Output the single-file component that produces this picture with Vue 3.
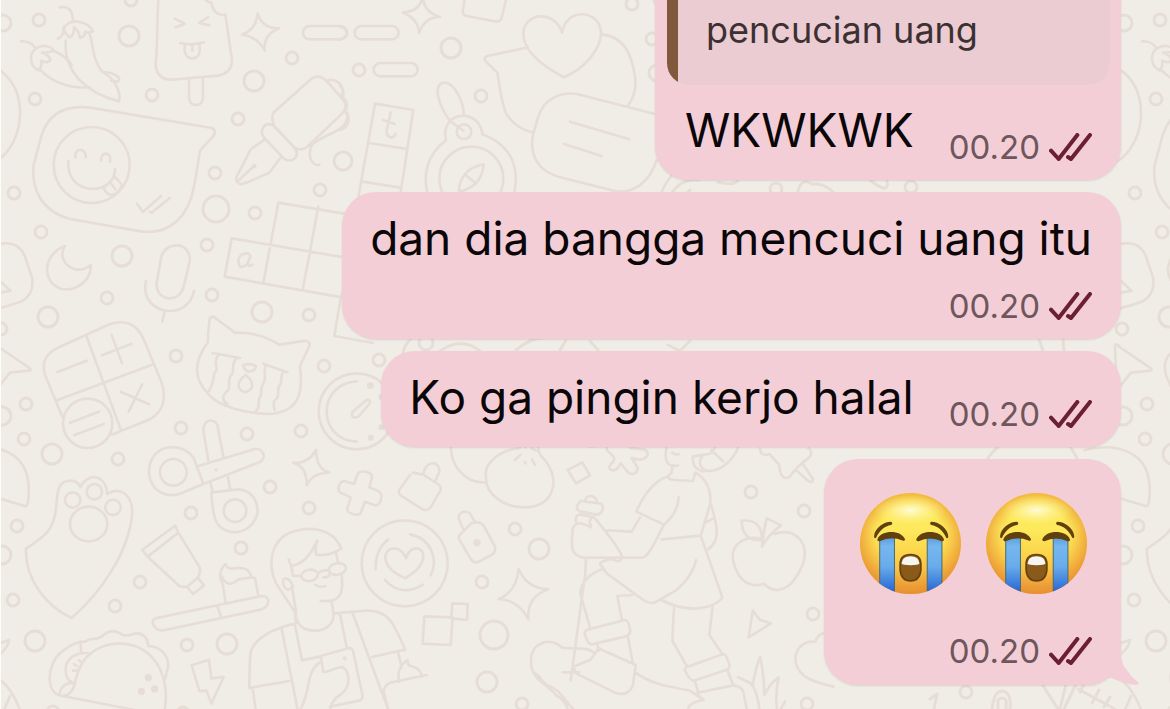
<script setup>
const time = '00.20'
const emojis = [0, 1]

// Small bubbles scattered through the wallpaper: [cx, cy, r]
const dots = [
  [3, 23, 8], [39, 20, 6], [129, 36, 10], [131, 0, 6], [35, 99, 6], [152, 95, 6], [14, 193, 6], [41, 232, 6],
  [238, 119, 6], [254, 81, 10], [292, 58, 6], [215, 173, 6], [216, 209, 13], [255, 213, 6], [320, 190, 6], [343, 161, 9],
  [122, 256, 10], [107, 298, 6], [48, 317, 10], [207, 245, 6], [212, 295, 6], [262, 312, 10], [309, 315, 6],
  [324, 366, 6], [379, 360, 6], [176, 356, 6], [1, 329, 6], [26, 404, 6], [2, 416, 9], [24, 439, 6], [52, 454, 10],
  [118, 459, 6], [181, 428, 6], [247, 434, 6], [301, 431, 6], [17, 526, 6], [2, 555, 9], [13, 600, 6], [35, 641, 10],
  [140, 582, 6], [115, 606, 6], [191, 513, 6], [241, 548, 6], [270, 487, 6], [309, 508, 6], [187, 645, 6], [227, 644, 10],
  [53, 712, 6], [183, 713, 6],
  [359, 70, 6], [451, 48, 10], [481, 96, 6], [632, 4, 6], [652, 39, 6], [657, 73, 8], [776, 189, 6], [911, 187, 6],
  [426, 343, 7], [515, 529, 6], [539, 549, 10], [482, 582, 6], [494, 635, 14], [487, 682, 10], [522, 704, 6],
  [751, 492, 6], [804, 511, 6], [813, 614, 6], [807, 704, 6], [966, 692, 6]
]
</script>

<template>
  <main class="chat">
    <svg class="wallpaper" aria-hidden="true">
      <defs>
        <g id="doodles">
          <circle v-for="(d, i) in dots.slice(0, 49)" :key="i" :cx="d[0]" :cy="d[1]" :r="d[2]" />

          <g class="zoomed" transform="scale(.333333)">
            <!-- chillies -->
            <path d="M180 22Q218 14 219 64M174 116Q192 106 190 88Q205 58 240 66Q268 72 279 94Q267 100 256 95Q254 112 240 114Q236 90 222 82Q222 110 208 112Q194 100 190 82M197 122C190 215 260 280 357 304C366 270 335 230 309 217C274 180 281 128 268 100M63 124Q90 122 104 142M116 211C90 200 85 165 106 146C130 130 155 140 162 153Q140 158 126 158Q150 166 151 181Q140 192 124 182Q126 202 116 211M162 153C190 165 205 180 216 195M122 211C160 250 215 266 270 262M309 217C340 214 370 236 352 245L334 242" />
            <!-- ice cream -->
            <path d="M475 0C470 90 474 120 467 195Q472 240 515 239L655 227Q696 218 696 180L676 44Q640 48 634 8Q618 6 610-8M567 237V295C571 322 605 322 609 295V232M524 56L554 71L527 82M624 52L597 69L628 76M541 129Q575 138 611 127M554 136V154C560 184 596 180 599 154V134M577 137V152" />
            <!-- sparkle and pills -->
            <path d="M773 40Q786 85 837 85Q790 104 794 151Q772 110 726 104Q768 90 773 40Z" />
            <rect x="909" y="78" width="132" height="40" rx="20" />
            <!-- speech bubble with face -->
            <path d="M125 405C145 345 190 313 270 323L636 384C650 392 645 401 638 410L600 452C590 510 585 555 574 592C548 670 490 708 410 692L210 657C125 635 92 565 101 495Z" />
            <circle cx="275" cy="495" r="114" />
            <path d="M226 472C222 442 258 442 257 472M303 482C302 452 337 454 330 486M205 484C197 590 345 590 345 507M345 530L311 564C323 592 351 594 366 555ZM330 546L346 568M411 611L429 636L483 588M449 635L455 638L509 594" />
            <!-- fountain pen -->
            <path d="M820 338L930 240C950 220 970 234 982 245L1030 300C1042 315 1035 332 1025 342L925 437C908 455 890 448 880 440L825 382Q812 360 820 338M985 240C1020 235 1035 270 1024 287M1042 340C1050 398 955 405 934 438C920 475 942 500 958 494M787 388C795 366 815 370 827 382L879 438C910 470 870 495 850 474L792 413Q782 400 787 388M792 420L752 448L710 530C705 550 718 556 735 550L808 518L841 474M714 543L763 497" />
            <circle class="fill" cx="763" cy="498" r="7" />
            <!-- big ball on the edge -->
            <path d="M-60 190C110 210 90 480-60 502" />
          </g>

          <g class="zoomed" transform="translate(0 230) scale(.333333)">
            <!-- speech bubble edge, moon -->
            <path d="M-60 46L15 40C45 38 65 55 75 80L96 142C102 178 90 200 65 214Q30 228-60 250M-18 190L32 183L-12 142M195 48C130 72 120 155 185 177C230 185 275 150 272 105C225 145 165 90 195 48Z" />
            <!-- microphone -->
            <path d="M484 80C498 30 575 35 569 95L551 170C538 222 466 214 470 160ZM438 153C425 210 467 240 505 243C545 245 575 220 582 182M494 245L487 275" />
            <!-- crossword -->
            <path d="M695 25L1050 85M674 140L1030 203M695 25L674 140M835-82L790 158M955-70L908 180M1070-60L1025 200M835-82L1050-46M1022 203L1003 318L1119 339M717 102C705 70 755 60 751 82L739 105Q718 118 717 102M751 80C740 105 743 112 757 104" />
            <!-- calculator -->
            <path d="M190 346L325 284C380 265 412 285 432 330L484 455C505 520 480 550 450 568L335 614M187 560L135 435C120 380 155 360 190 346M258 315L364 603M167 512L460 403M172 426L260 392M306 376L395 341M335 315L366 400M362 485L447 523M427 462L386 545M210 578L297 545M223 615L312 582" />
            <circle cx="263" cy="580" r="74" />
            <!-- weeping cat -->
            <path d="M623 338Q625 295 629 268C633 255 645 262 650 267L705 308Q775 305 838 344L918 332Q933 336 927 350L900 408C912 500 890 545 810 552C735 550 655 530 623 490C575 440 588 385 623 338M638 369L720 384M790 401L862 427M654 376C635 405 662 412 643 430C640 445 642 460 625 486M708 386C690 410 708 424 690 440C682 460 695 478 677 487C665 500 668 514 682 522M797 407C787 430 803 440 790 460C777 482 790 490 779 502C770 520 785 527 766 546M853 424C835 440 852 458 837 468C830 490 842 500 822 513Q820 528 824 540M730 405Q755 398 768 409C765 425 752 424 742 424Q730 416 730 405M737 435C708 455 710 480 735 487C765 480 762 454 737 435" />
            <!-- stopwatch -->
            <circle cx="1070" cy="544" r="114" />
            <path d="M1070 454C950 460 950 630 1070 635M1100 510Q1115 508 1108 522L1075 560C1058 568 1053 556 1057 546Z" />
            <g class="fill">
              <circle cx="1111" cy="467" r="10" /><circle cx="1144" cy="501" r="9" /><circle cx="1155" cy="546" r="9" /><circle cx="1144" cy="592" r="9" /><circle cx="1112" cy="623" r="9" />
            </g>
            <!-- paper plane -->
            <path d="M-18 346Q-14 338 0 354L90 415Q96 421 85 422L30 428L-10 478Q-18 400-18 346" />
          </g>

          <g class="zoomed" transform="translate(0 460) scale(.333333)">
            <!-- umbrella edge -->
            <path d="M-110-30C-30-50 95-40 86 105Q84 143 74 138L-20 110" />
            <!-- paw -->
            <path d="M78 266C140 225 155 210 165 165C175 115 162 60 215 62Q235 64 241 82C260 40 315 37 322 102C355 80 400 98 396 165C385 280 300 400 215 474C140 440 75 360 78 266Z" />
            <ellipse cx="266" cy="192" rx="56" ry="52" />
            <circle cx="218" cy="120" r="23" /><circle cx="283" cy="95" r="23" /><circle cx="339" cy="142" r="23" />
            <!-- scissors -->
            <path d="M582-4C545-60 445-50 447 40C453 95 500 115 540 101L610 72L582-4M610 72L780 6C805-8 785-44 755-30L595 18M625 2L610-90C610-128 655-128 655-90L671-6M631 66L638 97L715 88C760 90 775 130 772 160C755 230 665 235 645 175Q637 150 634 98M684 52L690 86" />
            <circle cx="520" cy="37" r="40" /><circle cx="705" cy="152" r="34" /><circle class="fill" cx="648" cy="30" r="5" />
            <!-- paint tube -->
            <path d="M426 270L526 197L535 218L443 290ZM535 218L599 322Q603 335 594 352L562 380Q550 382 538 378L443 290M594 354L612 376L579 402L560 380" />
            <!-- toothbrush -->
            <path d="M476 473L785 408C815 408 808 440 785 448L495 510C465 520 440 475 476 473M652 438L663 470M677 428L668 372C655 350 660 328 677 312Q678 325 695 326C735 318 750 330 755 352Q730 354 712 360Q700 374 684 370Q670 364 666 350M755 352L765 354L775 406" />
            <!-- taco -->
            <path d="M188 708C230 700 220 665 235 635C265 540 400 520 463 600C490 635 505 690 494 747M188 708Q300 730 405 750M188 708C130 700 145 610 180 580Q205 556 241 545L257 545C270 530 290 545 312 524C330 508 350 512 367 524C385 532 395 520 410 520C435 520 443 540 445 558C490 560 515 600 500 635L496 655M241 548L244 576M272 582C240 572 195 590 197 630Q198 660 215 666M180 700Q180 680 205 670L222 668M222 612L230 618M236 600L243 606M219 632H230" />
            <g class="fill"><circle cx="445" cy="653" r="11" /><circle cx="424" cy="694" r="11" /><circle cx="464" cy="687" r="11" /></g>
            <!-- bolt -->
            <path d="M575 616L627 599L634 655L671 651L634 731L620 692L598 693Z" />
            <!-- sparkle, plus -->
            <path d="M948-30Q950 30 988 37Q935 40 920 76Q922 20 880 8Q925 12 948-30Z" />
            <path d="M1073 42C1080 28 1117 36 1116 50L1108 82L1136 94C1152 102 1142 138 1125 136L1095 125L1082 158C1074 170 1040 160 1042 146L1052 112L1022 98C1008 90 1020 58 1036 64L1062 72Z" />
            <!-- student -->
            <path d="M888 490L884 455L828 370C800 310 815 240 870 218C930 195 1000 205 1024 266C995 284 970 288 948 284Q945 265 952 241C930 290 905 315 873 317L866 298M873 317L879 347L903 348M879 380C865 345 840 350 852 378Q862 398 876 382L888 455C885 490 905 512 945 512C980 512 1002 490 1001 460L994 422L962 423M994 422C1025 415 1030 390 1025 344M1008 278L1015 310M945 374Q955 384 976 378M970 352Q985 354 990 342" />
            <ellipse cx="929" cy="346" rx="25" ry="17" transform="rotate(-10 929 346)" />
            <ellipse cx="1012" cy="327" rx="26" ry="17" transform="rotate(-10 1012 327)" />
            <path d="M954 340Q970 326 987 332M888 490C800 510 760 545 751 580Q748 640 748 684L868 663M845 506L893 750M758 684L767 750M1001 460L1100 452C1170 450 1185 500 1215 569L1115 591M884 490L906 601L958 590M1020 462L1040 562M1058 460L1165 750M1195 580L1205 622M962 588L1045 565Q1055 562 1059 572L1088 708Q1088 718 1078 722L990 740M962 588L970 636C990 638 1010 618 1030 622C1050 640 1055 680 1020 705Q995 720 990 750M958 608C915 640 935 690 900 750M1198 665C1190 640 1200 615 1222 600Q1222 620 1240 620Q1265 630 1265 650M1152 690C1155 675 1165 668 1180 666L1280 645M1150 690L1165 750" />
            <circle class="fill" cx="1034" cy="595" r="6" />
            <!-- leaf and ball edge -->
            <path d="M-20 550Q5 550 27 540Q25 565-10 590M-40 650Q20 645 60 750M30 708L12 750" />
          </g>
        </g>
      </defs>

      <use href="#doodles" />
      <use href="#doodles" x="1121" />
      <circle v-for="(d, i) in dots.slice(49)" :key="i" :cx="d[0]" :cy="d[1]" :r="d[2]" />

      <g class="zoomed" transform="translate(340 0) scale(.333333)">
        <path d="M0 80C28 86 28 110 0 118M0 258Q15 270 8 290C25 305 22 325 15 336C35 350 25 385 0 390" />
        <rect x="44" y="78" width="132" height="40" rx="20" />
        <rect x="101" y="189" width="132" height="40" rx="20" />
        <path d="M248-10Q252 38 300 51Q255 50 237 99Q235 55 188 38Q240 35 248-10M375-10L368 35Q370 46 380 48L470 65Q483 64 486 50L500-10" />
        <!-- heart over chat bubbles -->
        <path d="M672 232C620 205 550 160 550 100C552 40 640 25 667 98C675 25 775 25 783 95C785 145 735 205 672 232M785 103C850 108 875 160 885 230Q892 280 863 318M560 143L442 168C430 172 434 182 440 187L472 218C480 265 482 300 498 340Q525 385 578 397M945 342L720 284C660 270 610 300 595 350L580 400C565 470 600 515 655 530L820 572C880 585 930 545 950 480M690 365L868 418M672 432L785 468M935-10Q955 30 970 45" />
        <!-- word tiles -->
        <path d="M105 311L220 330L180 590M105 311L50 620M87 429L195 446M67 545L180 563M152 338L140 390C138 415 160 418 167 402M129 360L164 372" />
        <!-- compass -->
        <path d="M370 392L330 363C295 315 278 255 310 248C345 245 372 310 371 346M318 421C308 380 330 348 371 347C410 350 425 380 427 403C485 425 525 465 527 530Q528 570 515 600M318 421C265 460 240 525 270 600M357 572C360 525 390 500 431 493C428 530 410 560 365 573ZM376 524L408 550" />
        <circle cx="372" cy="395" r="22" />
        <circle cx="394" cy="536" r="96" />
        <path d="M960 590Q970 555 1000 520" />
      </g>

      <g class="zoomed" transform="translate(410 440) scale(.333333)">
        <!-- candy and garlic -->
        <path d="M8 98L40 104L88 135Q95 144 90 154L60 205Q50 214 38 208L-28 166Q-38 158-30 146L0 105M40 102C45 60 90 60 88 95L75 125M126 0C110 70 165 130 225 127M228 110C220 75 265 30 330 24M385 22Q385 45 405 60C450 120 435 195 350 202C280 205 225 160 228 110M331 45L315 60M346 22L347 0M344 66L347 70M364 24L378 32M366 58L375 75" />
        <path d="M473 90L517 67L540 106L498 130ZM540 20L595 15C570 40 640 42 600 75C590 95 620 100 632 70L655 98C675 110 690 90 678 75L665 54C710 70 728 35 700 28L660 24" />
        <!-- lotion bottle -->
        <path d="M152 282L183 250Q210 242 222 258L255 320Q258 335 247 343L205 366Q192 370 183 358L148 298Q144 288 152 282M158 265L146 235C145 210 180 210 184 228L196 248" />
        <circle class="fill" cx="201" cy="308" r="11" />
        <!-- coffee cup -->
        <circle cx="-16" cy="370" r="129" />
        <path d="M0 283C65 295 85 360 62 406M-65 298Q-105 330-103 388M-75 420C-45 455 0 460 38 434M-12 355C0 310 50 320 38 360C30 390 5 400-14 415C-45 400-70 385-74 355C-75 315-25 315-12 355" />
        <!-- sparkle, squares -->
        <path d="M326 387Q350 445 415 448Q350 470 355 538Q325 480 266 477Q320 455 326 387M43 529L128 532L122 615L38 611ZM127 490L173 492L171 540L124 535Z" />
        <!-- hiker -->
        <path d="M770 20C760 65 775 75 787 78L785 98L772 110C735 120 700 165 679 215L762 254Q803 220 806 172M772 110Q780 120 795 120L849 123L856 98C895 120 905 160 900 195L872 287L755 298M787 38Q795 46 806 42M788 75Q798 80 804 76M849 50C845 85 875 100 890 92C860 80 870 55 876 50M915 20C910 50 885 40 849 50M890 92C930 98 970 60 985 22M904 30L940 65M902 190C920 250 935 300 895 328M882 250L910 235M690 233L665 275L593 271M762 254C735 305 715 353 695 353H520C470 345 490 295 488 265C500 240 525 252 543 262Q534 235 550 230C580 265 610 300 635 345Q637 365 620 363L604 358C590 358 570 366 570 372L590 400L700 480Q720 493 735 487L800 450Q850 405 858 360M872 287L937 472Q920 500 855 506Q800 505 755 480M498 245Q495 225 510 223L542 230M512 183L570 190Q582 195 577 212Q570 225 560 224L510 214Q498 210 502 195ZM525 183C530 160 558 165 562 188" />
        <path d="M528 357L526 398L482 722M576 388C540 400 508 430 512 465L540 562M667 465L622 468L636 540M535 568L645 540Q655 540 661 572Q660 585 648 589L545 613Q535 615 524 582Q524 570 535 568M565 625Q550 650 540 660L490 680L498 700L615 758C650 770 670 750 671 720L677 675L565 625M654 592L668 668M562 614L566 632M556 642C530 615 490 630 455 622C425 590 360 605 363 665C360 720 430 745 437 765Q465 780 473 807M370 698C395 705 390 725 410 734C455 750 460 780 490 807M458 697H508M680 700C730 735 780 740 840 752L880 780Q835 788 835 807" />
        <path d="M792 503L787 602L829 676M908 497L898 585L935 640M833 680L940 642Q950 642 959 678L955 688L850 722Q840 722 824 690Q824 683 833 680M855 725L865 758L970 736L953 692M970 736Q1000 738 1002 765L1010 807M860 760L880 780" />
        <path d="M984 712L1020 728Q1042 750 1048 807M1028 738Q1035 690 1050 650Q1062 700 1063 765Q1080 730 1106 712Q1095 760 1101 807M1125 785L1112 807" />
        <!-- pin -->
        <path d="M1050 25C1050 48 1068 46 1078 42L1108 75C1110 100 1115 120 1138 112Q1160 80 1200 50Q1208 30 1195 25M1160 92L1195 123Q1210 130 1209 117L1180 74" />
        <!-- apple -->
        <path d="M1056 296C1000 285 960 315 970 365C985 425 1020 445 1063 431C1085 460 1130 455 1155 415C1200 355 1190 300 1145 280Q1115 272 1094 282M995 242C1040 238 1056 260 1056 300C1020 305 995 285 995 242M1056 320Q1070 290 1113 256L1070 235Q1060 275 1056 320M1028 512L1050 540L1083 550L1016 592ZM1240 580Q1220 585 1216 606C1180 600 1150 630 1158 670C1170 715 1210 725 1270 740" />
      </g>

      <!-- fragments in the gaps between messages -->
      <path d="M670 196Q680 178 699 180M718 182Q732 186 738 181M690 190L684 196M797 196Q800 176 812 184Q825 183 833 192M870 180Q890 196 887 181M403 354Q404 344 412 338M440 351Q462 336 480 351M516 350Q530 338 543 338M560 350L566 340M590 341L598 350M668 345L680 351L690 341M1039 339L1043 351M1063 339L1064 351M988 458Q992 452 998 447M1070 446L1077 458M1042 684L1058 709M1066 684L1060 709M1076 684L1064 709M1078 689L1115 709M1085 682L1080 692M1099 690L1092 703M1110 697L1104 707M930 699L937 694L934 709M992 709Q994 691 1002 691Q1012 692 1010 709M998 709V700Q1002 696 1006 700V709" />
    </svg>

    <article class="bubble first">
      <blockquote class="quote">pencucian uang</blockquote>
      <div class="line">
        <p class="text">WKWKWK</p>
        <div class="meta">
          <time>{{ time }}</time>
          <svg class="ticks" viewBox="358 49 129 84" role="img" aria-label="Dibaca"><path d="M364 102L387 127L443 55M415 121L424 127L481 55" /></svg>
        </div>
      </div>
    </article>

    <article class="bubble stacked">
      <p class="text">dan dia bangga mencuci uang itu</p>
      <div class="meta">
        <time>{{ time }}</time>
        <svg class="ticks" viewBox="358 49 129 84" role="img" aria-label="Dibaca"><path d="M364 102L387 127L443 55M415 121L424 127L481 55" /></svg>
      </div>
    </article>

    <article class="bubble line">
      <p class="text">Ko ga pingin kerjo halal</p>
      <div class="meta">
        <time>{{ time }}</time>
        <svg class="ticks" viewBox="358 49 129 84" role="img" aria-label="Dibaca"><path d="M364 102L387 127L443 55M415 121L424 127L481 55" /></svg>
      </div>
    </article>

    <article class="bubble stacked last">
      <div class="emojis">
        <svg v-for="e in emojis" :key="e" class="emoji" viewBox="27 40 302 302" role="img" aria-label="Menangis keras">
          <defs>
            <linearGradient :id="'face' + e" x1="0" y1="0" x2="0" y2="1">
              <stop offset="0" stop-color="#fbe04e" />
              <stop offset=".35" stop-color="#fdea5c" />
              <stop offset=".65" stop-color="#fbd048" />
              <stop offset="1" stop-color="#eea239" />
            </linearGradient>
            <radialGradient :id="'rim' + e" gradientUnits="userSpaceOnUse" cx="178" cy="180" r="166">
              <stop offset=".6" stop-color="#ee9a34" stop-opacity="0" />
              <stop offset="1" stop-color="#e48a30" stop-opacity=".85" />
            </radialGradient>
            <radialGradient :id="'shine' + e">
              <stop offset="0" stop-color="#fffde8" stop-opacity=".9" />
              <stop offset="1" stop-color="#fff886" stop-opacity="0" />
            </radialGradient>
            <linearGradient :id="'tear' + e" x1="0" y1="0" x2="0" y2="1">
              <stop offset="0" stop-color="#5c9fe0" />
              <stop offset=".15" stop-color="#76b7f0" />
              <stop offset=".5" stop-color="#69aceb" />
              <stop offset=".95" stop-color="#2767d3" />
            </linearGradient>
            <clipPath :id="'disc' + e"><circle cx="178" cy="191" r="151" /></clipPath>
          </defs>
          <circle cx="178" cy="191" r="151" :fill="`url(#face${e})`" />
          <circle cx="178" cy="191" r="151" :fill="`url(#rim${e})`" />
          <ellipse cx="178" cy="92" rx="110" ry="46" :fill="`url(#shine${e})`" />
          <g :clip-path="`url(#disc${e})`">
            <rect x="86" y="174" width="44" height="170" :fill="`url(#tear${e})`" stroke="#456b78" stroke-width="3" />
            <rect x="228" y="174" width="44" height="170" :fill="`url(#tear${e})`" stroke="#456b78" stroke-width="3" />
          </g>
          <path fill="#62400d" d="M79 178C90 150 150 148 162 179Q160 185 154 182Q120 168 86 184Q78 186 79 178ZM195 179C207 148 267 150 278 178Q279 186 271 184Q236 168 202 184Q196 185 195 179Z" />
          <path fill="#62400d" d="M69 170C70 145 98 126 120 126Q127 130 120 136C100 140 86 151 75 174Q70 178 69 170ZM291 170C290 145 262 126 240 126Q233 130 240 136C260 140 274 151 285 174Q290 178 291 170Z" />
          <path fill="#8a5a1b" stroke="#65420f" stroke-width="5" d="M147 253Q147 224 178 224Q209 224 209 253V270Q206 303 178 303Q150 303 147 270Z" />
          <path fill="#f6f5ef" d="M151 251Q153 229 178 229Q203 229 205 251Q202 256 178 256Q154 256 151 251Z" />
        </svg>
      </div>
      <div class="meta">
        <time>{{ time }}</time>
        <svg class="ticks" viewBox="358 49 129 84" role="img" aria-label="Dibaca"><path d="M364 102L387 127L443 55M415 121L424 127L481 55" /></svg>
      </div>
      <svg class="tail" viewBox="0 0 46 46" aria-hidden="true"><path d="M0 44Q9 42 15 35Q23 40 32 42Q38 44 44 44Q47 43 45 41Q38 36 34 29Q28 24 28 10V0H0Z" /></svg>
    </article>
  </main>
</template>

<style>
body {
  margin: 0;
  background: #f0ede6;
}
</style>

<style scoped>
.chat {
  position: relative;
  box-sizing: border-box;
  min-height: 100vh;
  display: flex;
  flex-direction: column;
  align-items: flex-end;
  gap: 12px;
  padding: 0 49px 24px 0;
  overflow: hidden;
  border-left: 1px solid #fdfdfb;
  background: #f0ede6;
  color: #0b0709;
  font-family: Inter, "Liberation Sans", sans-serif;
}
.wallpaper {
  position: absolute;
  top: 0;
  left: -1px;
  width: calc(100% + 1px);
  height: 100%;
  fill: none;
  stroke: #e6ded6;
  stroke-width: 3;
  stroke-linecap: round;
  stroke-linejoin: round;
}
.zoomed {
  stroke-width: 8;
}
.fill {
  fill: #e6ded6;
  stroke: none;
}
.bubble {
  position: relative;
  box-sizing: border-box;
  border-radius: 34px;
  background: #f4ced7;
  box-shadow: 0 1px 2px rgba(90, 60, 60, 0.14);
}
.line {
  display: flex;
  align-items: flex-end;
  gap: 35px;
}
.bubble.line {
  padding: 12px 29px 16px 28px;
}
.first {
  padding: 0 11px 16px 12px;
  border-radius: 0 0 34px 34px;
}
.first .line {
  padding: 11px 18px 0 18px;
}
.quote {
  margin: 0;
  padding: 8px 28px 32px 39px;
  border-radius: 0 0 22px 22px;
  background: linear-gradient(to right, #80583c 11px, #eaccd2 11px);
  color: #3d3033;
  font-size: 36px;
  line-height: 45px;
}
.text {
  margin: 0;
  font-size: 46px;
  line-height: 68px;
  white-space: nowrap;
}
.first .text {
  padding-bottom: 0;
}
.meta {
  display: flex;
  align-items: center;
  gap: 9px;
  color: #6e565c;
  font-size: 33px;
  line-height: 34px;
}
.line .text {
  padding-bottom: 0;
}
.ticks {
  width: 43px;
  height: 28px;
  fill: none;
  stroke: #6b1f35;
  stroke-width: 12;
  stroke-linecap: round;
  stroke-linejoin: round;
}
.stacked {
  display: flex;
  flex-direction: column;
  align-items: flex-end;
  gap: 17px;
  padding: 12px 29px 16px 28px;
}
.last {
  gap: 40px;
  padding: 34px 29px 17px 36px;
}
.emojis {
  display: flex;
  gap: 25px;
  padding-right: 5px;
}
.emoji {
  display: block;
  width: 101px;
  height: 101px;
}
.tail {
  position: absolute;
  right: -18px;
  bottom: -2px;
  width: 46px;
  height: 46px;
  fill: #f4ced7;
}
</style>
